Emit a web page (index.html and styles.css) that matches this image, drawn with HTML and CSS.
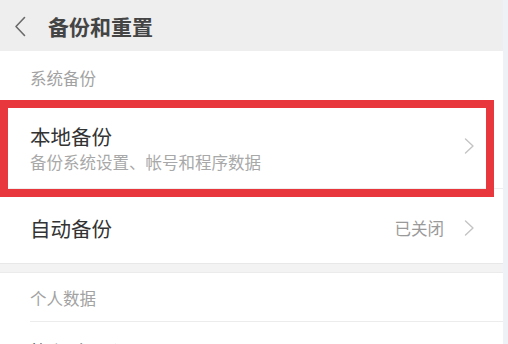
FILE: index.html
```html
<!DOCTYPE html>
<html lang="zh-CN">
<head>
<meta charset="utf-8">
<title>备份和重置</title>
<link rel="stylesheet" href="styles.css">
</head>
<body>
<div class="screen">
  <header class="topbar">
    <svg class="back" width="12" height="21" viewBox="0 0 12 21"><path d="M10.5 1.5 L2 10.5 L10.5 19.5" fill="none" stroke="#6a6a6a" stroke-width="1.6" stroke-linecap="round" stroke-linejoin="round"/></svg>
    <h1 class="title">备份和重置</h1>
  </header>
  <div class="section-label first">系统备份</div>
  <div class="row row-local">
    <div class="row-text">
      <div class="row-title">本地备份</div>
      <div class="row-sub">备份系统设置、帐号和程序数据</div>
    </div>
    <svg class="chev chev-top" width="11" height="16" viewBox="0 0 11 16"><path d="M1.5 1 L9 8 L1.5 15" fill="none" stroke="#c4c4c4" stroke-width="1.4" stroke-linecap="round" stroke-linejoin="round"/></svg>
    <div class="highlight"></div>
  </div>
  <div class="row row-auto">
    <div class="row-title">自动备份</div>
    <div class="row-value">已关闭</div>
    <svg class="chev" width="11" height="16" viewBox="0 0 11 16"><path d="M1.5 1 L9 8 L1.5 15" fill="none" stroke="#c4c4c4" stroke-width="1.4" stroke-linecap="round" stroke-linejoin="round"/></svg>
  </div>
  <div class="band"></div>
  <div class="section-label second">个人数据</div>
  <div class="row row-reset">
    <div class="row-title">恢复出厂设置</div>
  </div>
</div>
</body>
</html>
```
FILE: styles.css
```css
html, body {
  margin: 0;
  padding: 0;
}
body {
  background: #eef1f6;
  width: 508px;
  height: 344px;
  overflow: hidden;
  font-family: "Noto Sans CJK SC", "Noto Sans", sans-serif;
}
.screen {
  width: 503px;
  height: 344px;
  background: #ffffff;
  overflow: hidden;
}
.topbar {
  height: 51px;
  background: #eeeeee;
  display: flex;
  align-items: center;
  padding-left: 14px;
  box-sizing: border-box;
}
.back {
  display: block;
  margin-top: 1px;
}
.title {
  margin: 0 0 0 22px;
  font-size: 21px;
  line-height: 28px;
  font-weight: 700;
  color: #444444;
  letter-spacing: 0;
}
.section-label {
  padding-left: 30px;
  font-size: 16.5px;
  line-height: 22px;
  color: #a2a2a2;
}
.section-label.first {
  height: 49px;
  box-sizing: border-box;
  padding-top: 16px;
}
.section-label.second {
  height: 48px;
  box-sizing: border-box;
  padding-top: 14px;
}
.row {
  position: relative;
  display: flex;
  padding-left: 30px;
  padding-right: 28px;
  box-sizing: border-box;
}
.row-local {
  height: 89px;
  border-bottom: 1px solid #eeeeee;
  padding-top: 23px;
  align-items: flex-start;
}
.row-text {
  flex: 1;
}
.row-title {
  font-size: 20.5px;
  line-height: 26px;
  color: #333333;
}
.row-sub {
  font-size: 16.5px;
  line-height: 22px;
  color: #a8a8a8;
  margin-top: 2px;
}
.chev {
  display: block;
}
.chev-top {
  margin-top: 15px;
}
.highlight {
  position: absolute;
  left: 0;
  top: 0;
  width: 494px;
  height: 97px;
  border: 8px solid #e8373d;
  box-sizing: border-box;
  pointer-events: none;
}
.row-auto {
  height: 74px;
  align-items: center;
  padding-top: 3px;
}
.row-auto .row-title {
  flex: 1;
}
.row-value {
  font-size: 16.5px;
  line-height: 22px;
  color: #9a9a9a;
  margin-right: 20px;
}
.band {
  height: 10px;
  background: #f3f3f3;
  border-top: 1px solid #e8e8e8;
  border-bottom: 1px solid #ebebeb;
  box-sizing: border-box;
}
.row-reset {
  margin-left: 30px;
  padding-left: 0;
  border-top: 1px solid #ececec;
  padding-top: 17px;
  height: 60px;
}
```
